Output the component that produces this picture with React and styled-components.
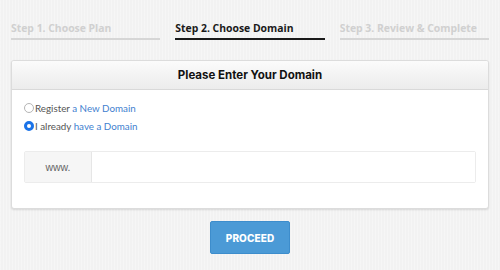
import React, { useState } from "react";
import styled, { createGlobalStyle } from "styled-components";

const GlobalStyle = createGlobalStyle`
  html, body {
    margin: 0;
    padding: 0;
  }
  body {
    width: 500px;
    height: 270px;
    overflow: hidden;
    background-color: #f2f2f2;
    background-image: repeating-linear-gradient(
      90deg,
      rgba(255, 255, 255, 0.3) 0px,
      rgba(255, 255, 255, 0.3) 1px,
      transparent 1px,
      transparent 3px
    );
    font-family: "Open Sans", "Liberation Sans", sans-serif;
  }
`;

const steps = [
  { label: "Step 1. Choose Plan", active: false },
  { label: "Step 2. Choose Domain", active: true },
  { label: "Step 3. Review & Complete", active: false },
];

const App = () => {
  const [choice, setChoice] = useState("existing");
  return (
    <>
      <GlobalStyle />
      <Page>
        <Steps>
          {steps.map(step => (
            <Step key={step.label} $active={step.active}>
              {step.label}
            </Step>
          ))}
        </Steps>

        <Panel>
          <PanelHeader>Please Enter Your Domain</PanelHeader>
          <PanelBody>
            <Options>
              <Option>
                <Radio
                  $checked={choice === "new"}
                  onClick={() => setChoice("new")}
                />
                Register <LinkText>a New Domain</LinkText>
              </Option>
              <Option>
                <Radio
                  $checked={choice === "existing"}
                  onClick={() => setChoice("existing")}
                />
                I already <LinkText>have a Domain</LinkText>
              </Option>
            </Options>
            <InputGroup>
              <Addon>www.</Addon>
              <DomainInput type="text" />
            </InputGroup>
          </PanelBody>
        </Panel>

        <Actions>
          <ProceedButton>PROCEED</ProceedButton>
        </Actions>
      </Page>
    </>
  );
};
export default App;

const Page = styled.div`
  padding: 0 11px;
  width: 478px;
`;

const Steps = styled.div`
  display: grid;
  grid-template-columns: repeat(3, 1fr);
  column-gap: 15px;
  padding-top: 20px;
`;

const Step = styled.div`
  font-family: "Open Sans", sans-serif;
  font-weight: 700;
  font-size: 10.4px;
  line-height: 16px;
  color: ${p => (p.$active ? "#1a1a1a" : "#d0d0d0")};
  padding-bottom: 2px;
  border-bottom: 2px solid ${p => (p.$active ? "#1a1a1a" : "#d6d6d6")};
  white-space: nowrap;
`;

const Panel = styled.div`
  margin-top: 20px;
  background: #fff;
  border: 1px solid #dcdcdc;
  border-radius: 3px;
  box-shadow: 0 1px 2px rgba(0, 0, 0, 0.12);
  overflow: hidden;
`;

const PanelHeader = styled.div`
  height: 28px;
  display: flex;
  align-items: center;
  justify-content: center;
  font-family: "Inter", "Liberation Sans", sans-serif;
  font-weight: 700;
  font-size: 11.5px;
  color: #111;
  background: linear-gradient(#fbfbfb, #ececec);
  border-bottom: 1px solid #d9d9d9;
`;

const PanelBody = styled.div`
  padding: 10px 12px 25px 12px;
`;

const Options = styled.div`
  display: flex;
  flex-direction: column;
  gap: 3px;
`;

const Option = styled.label`
  display: flex;
  align-items: center;
  height: 15px;
  font-family: "Lato", "Liberation Sans", sans-serif;
  font-weight: 400;
  font-size: 9.8px;
  color: #555;
  white-space: pre;
  cursor: pointer;
`;

const Radio = styled.span`
  width: 10px;
  height: 10px;
  border-radius: 50%;
  margin-right: 1px;
  box-sizing: border-box;
  border: ${p => (p.$checked ? "3px solid #1a73e8" : "1px solid #b5b5b5")};
  background: #fff;
`;

const LinkText = styled.span`
  color: #3f7fcf;
`;

const InputGroup = styled.div`
  display: flex;
  margin-top: 18px;
  height: 30px;
  border: 1px solid #ececec;
  border-radius: 2px;
`;

const Addon = styled.div`
  width: 66px;
  display: flex;
  align-items: center;
  justify-content: center;
  background: #f6f6f6;
  border-right: 1px solid #e6e6e6;
  font-family: "Liberation Sans", Arial, sans-serif;
  font-size: 10.5px;
  color: #666;
`;

const DomainInput = styled.input`
  flex: 1;
  border: none;
  outline: none;
  background: #fff;
`;

const Actions = styled.div`
  display: flex;
  justify-content: center;
  margin-top: 12px;
`;

const ProceedButton = styled.button`
  width: 80px;
  height: 33px;
  background: #4b9ad6;
  border: 1px solid #3d8dcc;
  border-radius: 2px;
  color: #fff;
  font-family: "Inter", "Liberation Sans", sans-serif;
  font-weight: 800;
  font-size: 10px;
  letter-spacing: 0.1px;
  cursor: pointer;
`;
